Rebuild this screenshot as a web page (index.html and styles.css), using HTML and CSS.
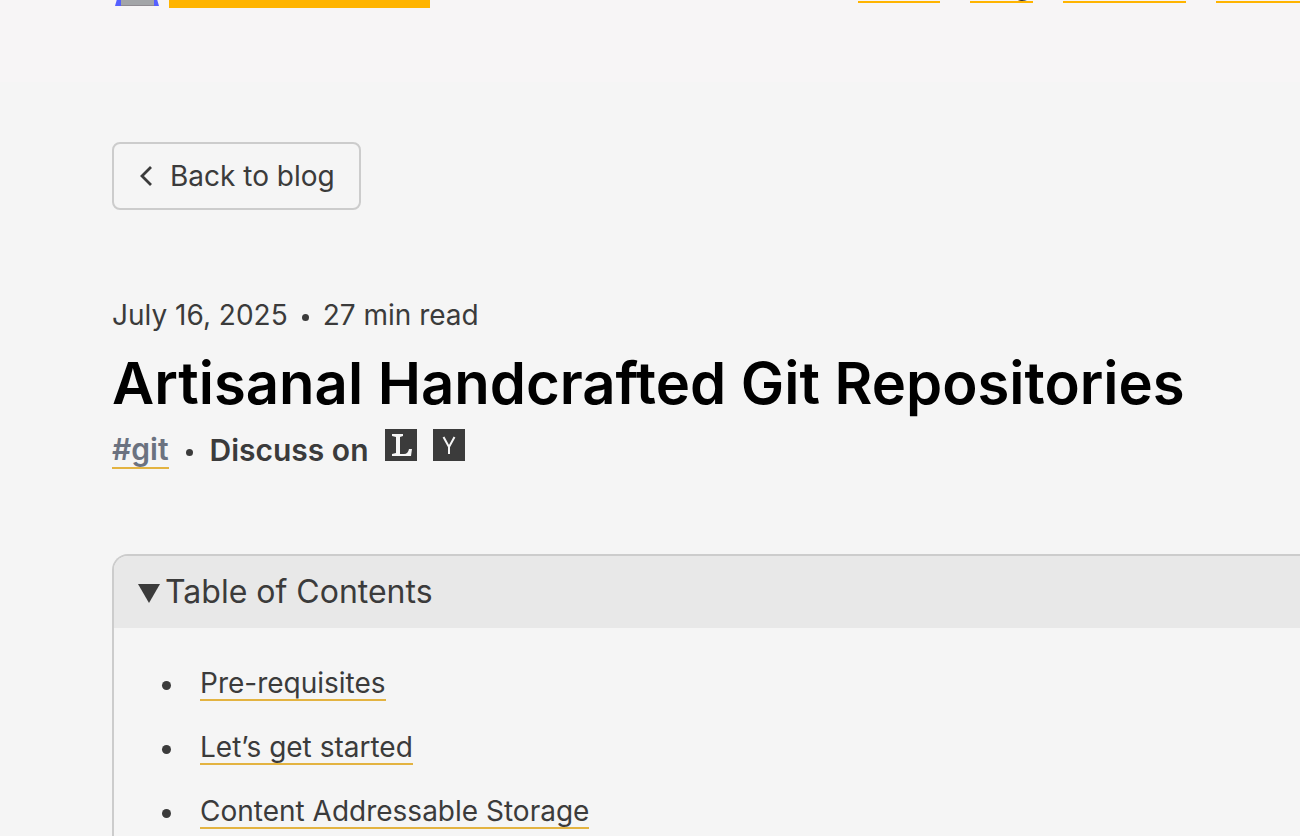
FILE: index.html
```html
<!DOCTYPE html>
<html lang="en">

<head>
    <meta charset="UTF-8">
    <meta name="viewport" content="width=device-width, initial-scale=1.0">
    <title>Artisanal Handcrafted Git Repositories</title>
    <link rel="stylesheet" href="styles.css">
</head>

<body>
    <header class="siteHeader">
        <a class="brand" href="#" aria-label="Home page">
            <svg class="brandIcon" width="44" height="48" viewBox="0 0 44 48" aria-hidden="true">
                <path d="M14 0h16l14 48H0z" fill="#5560ff" />
                <path d="M6 30h33v17H6z" fill="#a3a5a8" />
                <path d="M6 47h33v1H6z" fill="#8f8b91" />
            </svg>
            <span class="brandName"></span>
        </a>
        <nav class="siteNav">
            <a href="#">Home</a>
            <a href="#">Blog</a>
            <a href="#">Software</a>
            <a href="#">Contact</a>
        </nav>
    </header>

    <main class="content">
        <a class="backButton" href="#">
            <svg width="14" height="22" viewBox="0 0 14 22" aria-hidden="true">
                <path d="M13 2L4 11l9 9" fill="none" stroke="currentColor" stroke-width="2.8" />
            </svg>
            Back to blog
        </a>

        <article>
            <p class="postMeta"><time datetime="2025-07-16">July 16, 2025</time><span class="dot"></span>27 min read</p>
            <h1 class="postTitle">Artisanal Handcrafted Git Repositories</h1>
            <div class="postLinks">
                <a class="tag" href="#">#git</a>
                <span class="dot"></span>
                <span class="discuss">Discuss on</span>
                <a class="share" href="#" aria-label="Lobsters">
                    <svg width="32" height="32" viewBox="0 0 32 32" aria-hidden="true">
                        <path d="M0 0h32v32H0z" fill="#3b3b3b" />
                        <path d="M7 5h11v2l-3 1v17h4q4 0 5-5h3l-1 7H7v-2l4-1V8L7 7z" fill="#f5f5f5" />
                    </svg>
                </a>
                <a class="share" href="#" aria-label="Hacker News">
                    <svg width="32" height="32" viewBox="0 0 32 32" aria-hidden="true">
                        <path d="M0 0h32v32H0z" fill="#3b3b3b" />
                        <path d="M10.500 8L16 18l5.500-10M16 17v8" fill="none" stroke="#f5f5f5" stroke-width="2" />
                    </svg>
                </a>
            </div>

            <details class="toc" open>
                <summary>Table of Contents</summary>
                <ul>
                    <li><a href="#">Pre-requisites</a></li>
                    <li><a href="#">Let’s get started</a></li>
                    <li><a href="#">Content Addressable Storage</a></li>
                </ul>
            </details>
        </article>
    </main>
</body>

</html>
```
FILE: styles.css
```css
* {
    margin: 0;
    padding: 0;
    box-sizing: border-box;
}

body {
    font-family: Inter, "Liberation Sans", sans-serif;
    font-size: 28px;
    line-height: 40px;
    color: #3b3b3b;
    background-color: #f5f5f5;
    overflow: hidden;
}

a {
    color: inherit;
    text-decoration: none;
}

/* the header is scrolled most of the way out of view */
.siteHeader {
    display: flex;
    align-items: flex-end;
    justify-content: space-between;
    margin-top: -80px;
    padding: 24px 0 74px 112px;
    background-color: #f7f5f6;
}

.brand {
    display: flex;
    gap: 10px;
    padding-left: 3px;
}

.brandIcon {
    margin-top: 14px;
}

.brandName {
    width: 261px;
    height: 64px;
    background-color: #ffb400;
}

.siteNav {
    display: flex;
    gap: 30px;
    margin-right: -24px;
    padding-bottom: 5px;
}

.siteNav a {
    line-height: 32px;
    padding: 0 2px;
    border-bottom: 2px solid #ffb400;
}

.content {
    padding: 60px 0 0 112px;
}

.backButton {
    display: inline-flex;
    align-items: center;
    gap: 18px;
    padding: 12px 24px;
    border: 2px solid #cccccc;
    border-radius: 8px;
}

.postMeta {
    display: flex;
    align-items: center;
    margin-top: 85px;
}

.dot {
    width: 7px;
    height: 7px;
    margin: 4px 14px 0;
    border-radius: 50%;
    background-color: #3b3b3b;
}

.postTitle {
    font-size: 58px;
    line-height: 72px;
    font-weight: 600;
    color: #000;
    white-space: nowrap;
    margin-top: 12px;
}

.postLinks {
    display: flex;
    align-items: center;
    margin-top: 10px;
    font-size: 30px;
    font-weight: 600;
}

.postLinks .dot {
    margin: 4px 17px 0;
}

.tag {
    color: #6b7280;
    line-height: 36px;
    border-bottom: 2px solid #e3b341;
}

.share {
    display: flex;
    margin: 0 0 10px 16px;
}

.toc {
    margin-top: 83px;
    border: 2px solid #cccccc;
    border-right: none;
    border-top-left-radius: 16px;
    overflow: hidden;
}

.toc summary {
    padding: 16px 24px;
    font-size: 32px;
    background-color: #e8e8e8;
    list-style: none;
}

.toc summary::before {
    content: "";
    display: inline-block;
    margin-right: 5px;
    border: 11px solid transparent;
    border-top: 19px solid #3b3b3b;
    border-bottom: none;
}

.toc ul {
    padding: 36px 0 36px 48px;
    list-style: none;
}

.toc li {
    display: flex;
    align-items: center;
    gap: 29px;
    height: 40px;
    margin-bottom: 24px;
}

.toc li::before {
    content: "";
    width: 9px;
    height: 9px;
    margin-top: 2px;
    border-radius: 50%;
    background-color: #3b3b3b;
}

.toc li a {
    line-height: 32px;
    border-bottom: 2px solid #e3b341;
}
```
